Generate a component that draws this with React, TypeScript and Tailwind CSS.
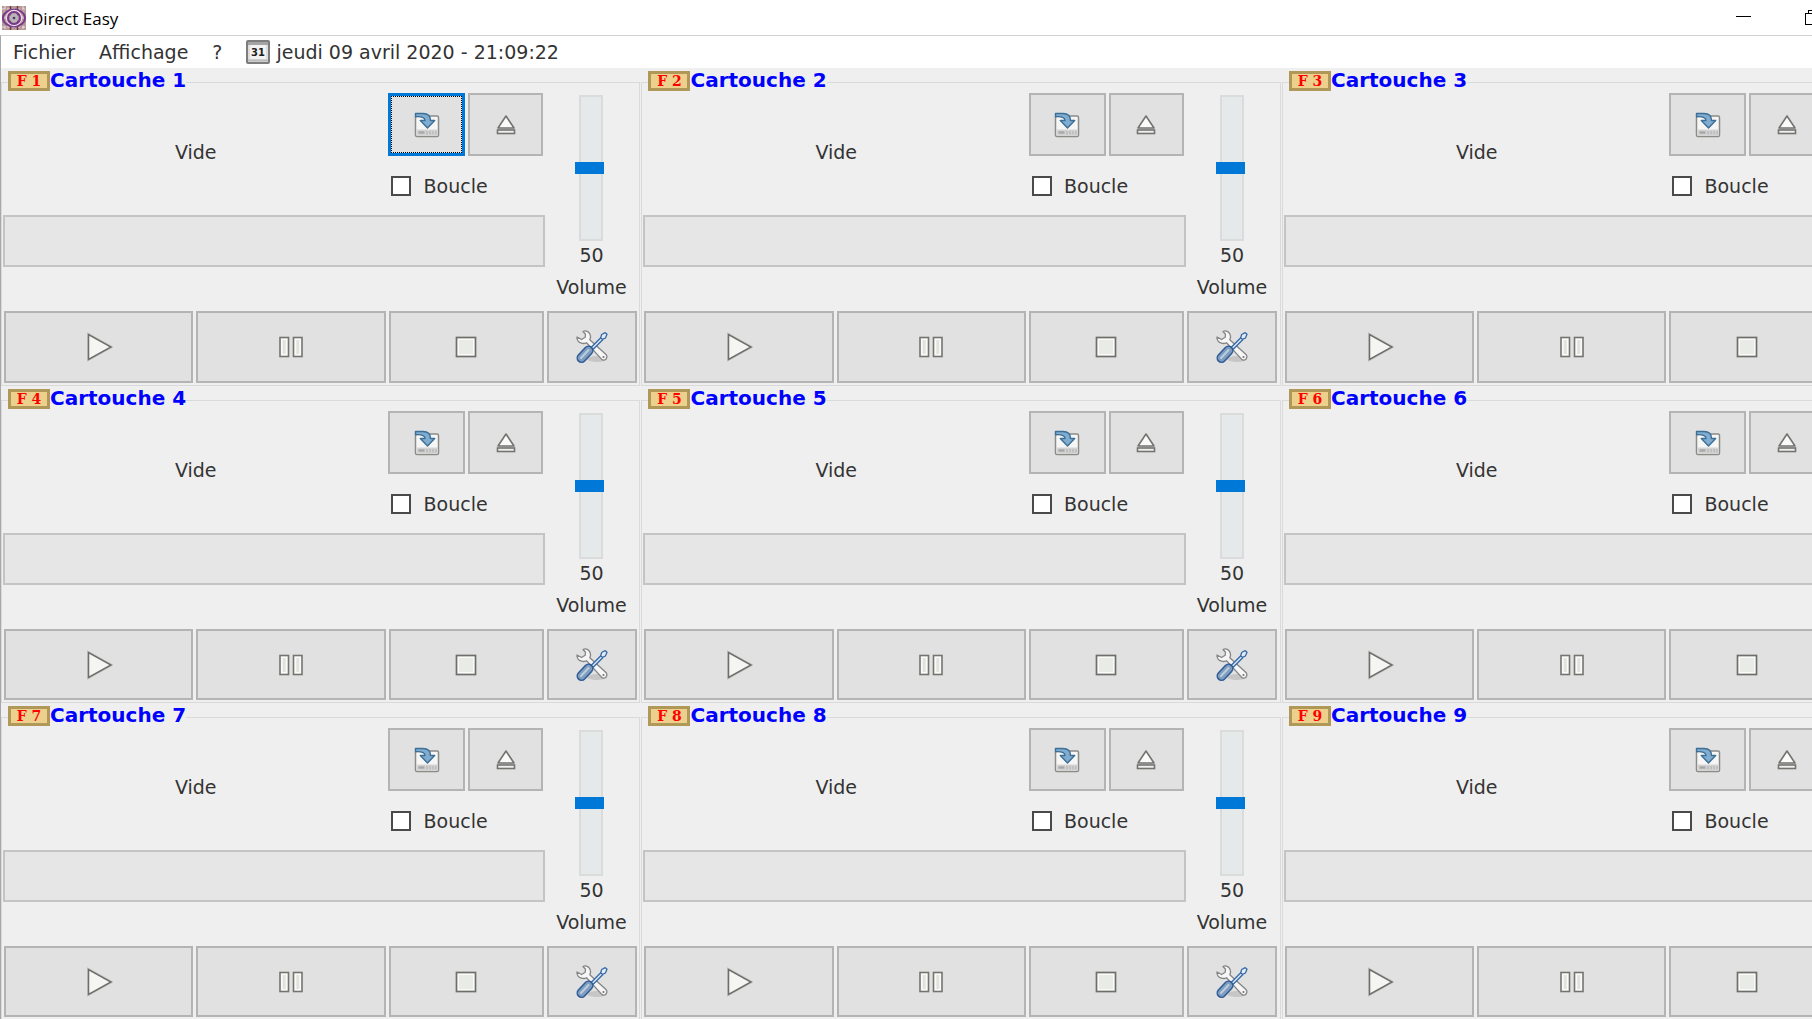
import React from "react";

function AppLogo() {
  return (
    <svg width="24" height="24" viewBox="0 0 24 24" aria-hidden="true">
      <rect width="24" height="24" fill="#b89797" />
      <path d="M0 3h24M0 21h24M3 0v24M21 0v24" stroke="#fff" strokeWidth="1" strokeDasharray="3 2" opacity=".7" />
      <path d="M8.500 0v24M15.500 0v24" stroke="#6e3d42" strokeWidth="1.500" />
      <ellipse cx="12" cy="12" rx="11" ry="8.500" fill="none" stroke="#7a3a8c" strokeWidth="2" />
      <circle cx="12" cy="12" r="7.500" fill="none" stroke="#e6dbe8" strokeWidth="1.500" />
      <circle cx="12" cy="12" r="6" fill="none" stroke="#7a3a8c" strokeWidth="2" />
      <circle cx="12" cy="12" r="4.500" fill="#b9b4ba" />
      <circle cx="12" cy="12" r="1.300" fill="#4f3560" />
    </svg>
  );
}

function CalendarIcon() {
  return (
    <svg width="24" height="24" viewBox="0 0 24 24" aria-hidden="true">
      <rect x="1" y="1" width="22" height="22" rx="1" fill="#dcdcdc" stroke="#7d7d7d" strokeWidth="2" />
      <rect x="2" y="2" width="20" height="3" fill="#a4a4a4" />
      <rect x="4" y="5" width="16" height="14" fill="#f2f2f2" />
      <path d="M2 20.500h20" stroke="#bdbdbd" strokeWidth="2" />
      <text x="12" y="16" textAnchor="middle" fontSize="10" fontWeight="bold" fill="#1c1c1c" fontFamily="DejaVu Sans, sans-serif">31</text>
    </svg>
  );
}

function LoadIcon() {
  return (
    <svg width="26" height="26" viewBox="0 0 26 26" aria-hidden="true">
      <rect x="1.500" y="4" width="23" height="20.500" rx="1.500" fill="#f6f6f6" stroke="#8b8b87" strokeWidth="1.500" />
      <rect x="2.500" y="17.500" width="21" height="6.300" fill="#d3d3d3" />
      <path d="M4.500 20.500h6" stroke="#a8a8a8" strokeWidth="2.500" />
      <path d="M13 19v3.500M16 19v3.500M19 19v3.500M22 19v3.500" stroke="#b5b5b5" strokeWidth="1.200" />
      <path d="M1.500 1.500H9c5 0 7.500 2.500 7.500 7h4.200L13.500 16 6.300 8.500H11C11 5.500 7.500 4.300 1.500 4.700z" fill="#7facd0" stroke="#3d6f96" strokeWidth="1.400" strokeLinejoin="round" />
    </svg>
  );
}

function EjectIcon() {
  return (
    <svg width="22" height="22" viewBox="0 0 22 22" aria-hidden="true">
      <path d="M11 2L19 14H3z" fill="#fbfbfa" stroke="#737370" strokeWidth="1.600" strokeLinejoin="round" />
      <rect x="2.500" y="16" width="17" height="3.500" fill="#f1f1ef" stroke="#737370" strokeWidth="1.600" />
    </svg>
  );
}

function PlayIcon() {
  return (
    <svg width="28" height="30" viewBox="0 0 28 30" aria-hidden="true">
      <path d="M3.500 2.500v25L26 15z" fill="#f3f3f1" stroke="#cbcbca" strokeWidth="3" />
      <path d="M3.500 2.500v25L26 15z" fill="#f5f5f3" stroke="#6e6e6b" strokeWidth="1.500" />
    </svg>
  );
}

function PauseIcon() {
  return (
    <svg width="26" height="22" viewBox="0 0 26 22" aria-hidden="true">
      <g fill="#fafaf9" stroke="#747471" strokeWidth="1.600">
        <rect x="2" y="1.500" width="8.500" height="19" />
        <rect x="15.500" y="1.500" width="8.500" height="19" />
      </g>
      <path d="M6.200 4v14M19.800 4v14" stroke="#e1e3dd" strokeWidth="3" />
    </svg>
  );
}

function StopIcon() {
  return (
    <svg width="22" height="22" viewBox="0 0 22 22" aria-hidden="true">
      <rect x="1.500" y="1.500" width="19" height="19" fill="#fafaf9" stroke="#6e6e6b" strokeWidth="1.700" />
      <rect x="4" y="4" width="14" height="14" fill="#e9ebe6" />
    </svg>
  );
}

function ToolsIcon() {
  return (
    <svg width="34" height="36" viewBox="0 0 34 36" aria-hidden="true">
      <ellipse cx="22" cy="30" rx="10" ry="3" fill="#c6c6c6" />
      <path
        d="M8 2.500c3-1.500 7 .5 7.500 4.500.2 1.500-.2 2.700-.7 3.700L31 25.500c1.500 1.500 1 4-.5 5-1.500 1-3.200.6-4.200-.6L11.500 13.700c-1.500.8-3.300 1-5 .5C3.500 13.400 1.700 10.700 2 8l4.500 2.500 3.700-2.200.3-3z"
        fill="#f6f6f6" stroke="#858585" strokeWidth="1.300" strokeLinejoin="round"
      />
      <circle cx="28.500" cy="28" r="1.100" fill="#777" />
      <path d="M17 19.500L27 9.500" stroke="#3568a5" strokeWidth="4" />
      <path d="M17 19.500L27 9.500" stroke="#dbe7f3" strokeWidth="1.500" />
      <path d="M25.700 8.800l1-3.300 3.500-1.800 1.800 1.600-1.600 3.700-3 1.400z" fill="#e3edf7" stroke="#3568a5" strokeWidth="1.300" strokeLinejoin="round" />
      <path d="M6.500 29l7-7.500" stroke="#2f5c96" strokeWidth="10" strokeLinecap="round" />
      <path d="M6.500 29l7-7.500" stroke="#7f9dbf" strokeWidth="7" strokeLinecap="round" />
      <path d="M6 29l7.500-8" stroke="#bccde0" strokeWidth="2" strokeLinecap="round" />
    </svg>
  );
}

function PushButton({ label, className, focused, children }: { label: string; className: string; focused?: boolean; children: React.ReactNode }) {
  const frame = focused ? "border-3 border-[#0078d7] p-0" : "border-2 border-[#b4b4b4]";
  return (
    <button type="button" aria-label={label} className={`flex items-center justify-center bg-[#e1e1e1] ${frame} ${className}`}>
      {focused ? (
        <span className="flex size-full items-center justify-center border border-dotted border-black">{children}</span>
      ) : (
        children
      )}
    </button>
  );
}

function VolumeSlider() {
  return (
    <label className="flex flex-col items-center pt-px pl-px">
      <input
        type="range"
        min="0"
        max="100"
        defaultValue="50"
        className="h-[146px] w-6 appearance-none border-2 border-[#dadcdc] bg-[#e5e9ea] [direction:rtl] [writing-mode:vertical-lr] [&::-webkit-slider-thumb]:-ml-[3px] [&::-webkit-slider-thumb]:h-3 [&::-webkit-slider-thumb]:w-[29px] [&::-webkit-slider-thumb]:appearance-none [&::-webkit-slider-thumb]:bg-[#0078d7]"
      />
      <span className="mt-0.5 leading-6">50</span>
      <span className="mt-2 leading-6">Volume</span>
    </label>
  );
}

function Cartridge({ n, withVolume }: { n: number; withVolume: boolean }) {
  return (
    <fieldset className="mt-0.5 mr-px flex min-w-0 flex-col border border-[#dadada]">
      <legend className="ml-1.5 flex h-6 items-start pt-px">
        <span className="flex h-5 w-[42px] items-center justify-center border-3 border-[#b09858] bg-[#ecd08c] font-['DejaVu_Serif'] text-[14px] leading-none font-bold text-[#ff0000]">
          F {n}
        </span>
        <span className="text-[20px] leading-[18px] font-bold text-[#0000ff]">Cartouche {n}</span>
      </legend>

      <div className="flex h-full flex-col">
        <div className="flex h-[217px] pr-[3px]">
          <div className="flex flex-1 flex-col pl-px">
            <div className="flex h-[121px]">
              <div className="flex h-[117px] flex-1 items-center justify-center">Vide</div>
              <div className="-mt-px w-[157px]">
                <div className="flex gap-[3px]">
                  <PushButton label="Charger" className="h-[63px] w-[77px]" focused={n === 1}>
                    <LoadIcon />
                  </PushButton>
                  <PushButton label="Éjecter" className="h-[63px] w-[75px]">
                    <EjectIcon />
                  </PushButton>
                </div>
                <label className="mt-[18px] ml-[3px] flex items-center gap-3 leading-6">
                  <input type="checkbox" className="size-5 appearance-none border-2 border-[#4a4a4a] bg-white" />
                  Boucle
                </label>
              </div>
            </div>
            <div role="progressbar" aria-label="Progression" className="h-[52px] border-2 border-[#c4c4c4] bg-[#e6e6e6]" />
          </div>
          <div className="w-[91px]">{withVolume && <VolumeSlider />}</div>
        </div>
        <div className="flex flex-1 gap-[3px] pr-[3px] pb-0.5 pl-0.5">
          <PushButton label="Lecture" className="flex-1">
            <PlayIcon />
          </PushButton>
          <PushButton label="Pause" className="flex-1">
            <PauseIcon />
          </PushButton>
          <PushButton label="Arrêt" className="w-[155px]">
            <StopIcon />
          </PushButton>
          <PushButton label="Réglages" className="w-[90px]">
            <ToolsIcon />
          </PushButton>
        </div>
      </div>
    </fieldset>
  );
}

export default function App() {
  return (
    <div className="flex h-screen flex-col overflow-hidden bg-[#efefef] font-['DejaVu_Sans'] text-[19px] text-[#333333]">
      <header className="flex h-[35px] shrink-0 items-center bg-white text-black">
        <div className="ml-0.5 flex items-center gap-[5px]">
          <AppLogo />
          <h1 className="pt-0.5 font-['Open_Sans'] text-[17px] leading-6">Direct Easy</h1>
        </div>
        <div className="ml-auto flex gap-[54px]">
          <button type="button" aria-label="Réduire">
            <svg width="15" height="15" viewBox="0 0 15 15" shapeRendering="crispEdges">
              <path d="M0 6.500h15" stroke="#000" />
            </svg>
          </button>
          <button type="button" aria-label="Agrandir">
            <svg width="7" height="15" viewBox="0 0 7 15" fill="none" stroke="#000" shapeRendering="crispEdges">
              <path d="M12 3.500H.5v11H12M3.500 3.500v-3H12" />
            </svg>
          </button>
        </div>
      </header>

      <div className="flex flex-1 flex-col border-t border-l border-t-[#d0d0d0] border-l-[#a8a8a8]">
        <nav className="flex h-8 shrink-0 items-center bg-white pl-3">
          <button type="button">Fichier</button>
          <button type="button" className="ml-6">Affichage</button>
          <button type="button" className="ml-6">?</button>
          <div className="ml-6 flex items-center gap-1.5">
            <CalendarIcon />
            <time dateTime="2020-04-09T21:09:22">jeudi 09 avril 2020 - 21:09:22</time>
          </div>
        </nav>

        <main className="grid w-[106.1%] grid-cols-3 grid-rows-[318px_317px_317px]">
          {[1, 2, 3, 4, 5, 6, 7, 8, 9].map((n) => (
            <Cartridge key={n} n={n} withVolume={n % 3 !== 0} />
          ))}
        </main>
      </div>
    </div>
  );
}
